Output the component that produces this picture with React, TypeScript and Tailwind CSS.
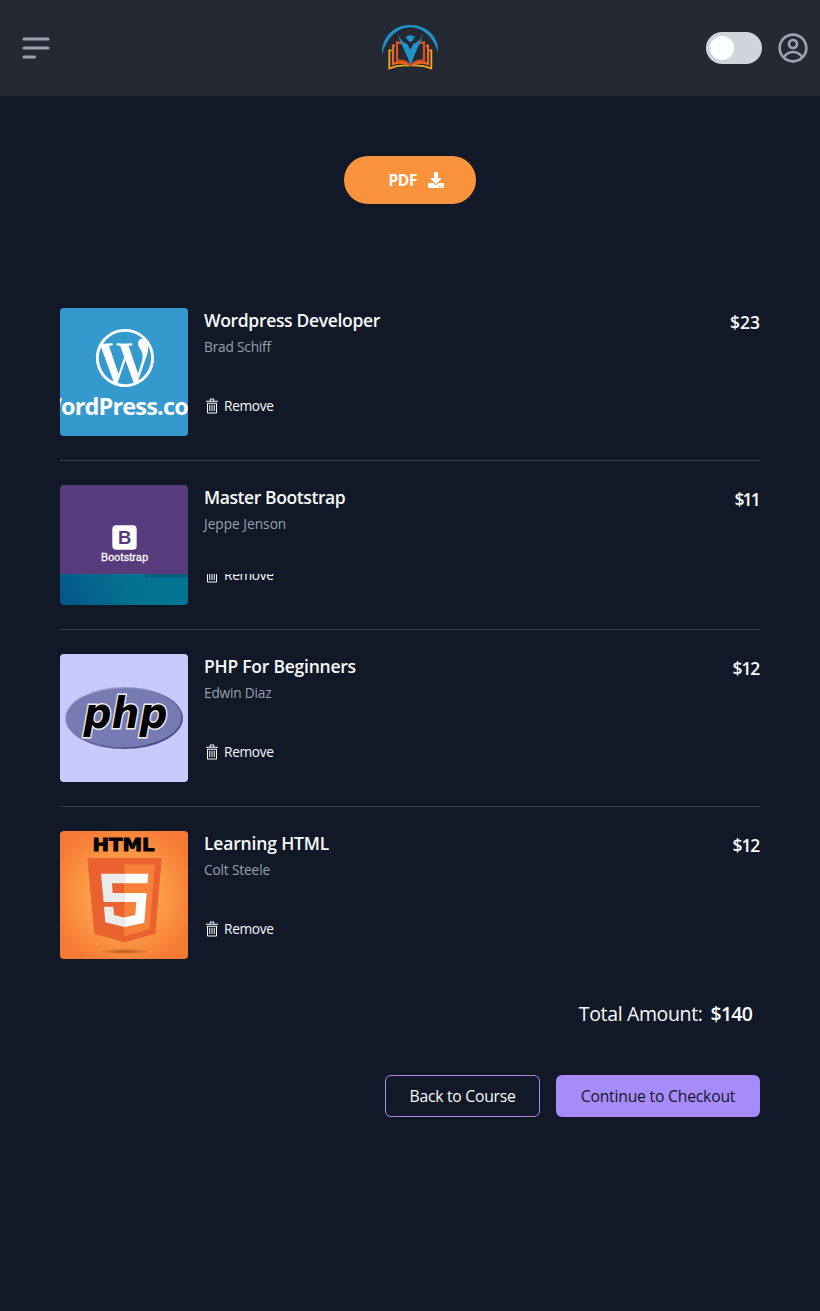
import type { ReactNode } from 'react';
import { CgProfile } from 'react-icons/cg';
import { FaDownload, FaWordpressSimple } from 'react-icons/fa';

function Logo() {
  return (
    <svg className="h-[75px] w-20" viewBox="0 0 240 225" fill="none">
      <path d="M37 132C31 82 70 42 121 42S209 80 204 126C194 84 162 49 121 49S46 86 37 132Z" fill="#2093c8" />
      <g strokeWidth="5.5">
        <g stroke="#f5a623">
          <path d="M65 118H58V172C78 164 100 162 119 164" />
          <path d="M178 118H184V172C164 164 142 162 124 164" />
        </g>
        <g stroke="#ea6a1f" strokeWidth="6.5">
          <path d="M75 104H69V159C86 152 102 154 118 162" />
          <path d="M168 104H174V159C156 152 140 154 125 162" />
        </g>
        <g stroke="#dd521c" strokeWidth="6.5">
          <path d="M99 99C94 95 88 94 81 94V149C97 148 109 152 118 161" />
          <path d="M144 99C149 95 154 94 162 94V149C146 148 134 152 125 161" />
        </g>
      </g>
      <path d="M82 67C90 86 100 95 112 99L121 116L130 99C142 95 152 86 160 67C151 98 134 126 122 165C110 126 91 98 82 67Z" fill="#2093c8" />
      <path d="M105 78L121 72L136 77L131 81C131 88 127 92 121 92S112 88 111 82Z" fill="#2093c8" />
    </svg>
  );
}

function TrashIcon() {
  return (
    <svg className="size-4 fill-current" viewBox="0 0 512 512">
      <path d="M96,472a23.82,23.82,0,0,0,23.579,24H392.421A23.82,23.82,0,0,0,416,472V152H96Zm32-288H384V464H128Z" />
      <rect width="32" height="200" x="168" y="216" />
      <rect width="32" height="200" x="240" y="216" />
      <rect width="32" height="200" x="312" y="216" />
      <path d="M328,88V40c0-13.458-9.488-24-21.6-24H205.6C193.488,16,184,26.542,184,40V88H64v32H448V88ZM216,48h80V88H216Z" />
    </svg>
  );
}

function WordpressArt() {
  return (
    <svg className="h-32 w-32 rounded" viewBox="0 0 128 128">
      <rect width="128" height="128" fill="#3499cd" />
      <FaWordpressSimple x="35" y="20" size={60} color="#fff" />
      <text x="65" y="107" textAnchor="middle" textLength="172" className="fill-white font-['Open_Sans',sans-serif] text-[23.5px] font-bold">
        WordPress.com
      </text>
    </svg>
  );
}

function BootstrapArt() {
  return (
    <svg className="h-[120px] w-32 rounded" viewBox="0 0 128 120">
      <defs>
        <linearGradient id="teal" gradientUnits="userSpaceOnUse" x1="-10" y1="120" x2="85" y2="70">
          <stop offset="0" stopColor="#05528a" />
          <stop offset="0.7" stopColor="#04708f" />
          <stop offset="1" stopColor="#047494" />
        </linearGradient>
      </defs>
      <rect width="128" height="89" fill="#573b7d" />
      <rect x="52.3" y="40.3" width="24.4" height="24.4" rx="4" fill="#fff" />
      <text x="64.8" y="59.2" textAnchor="middle" className="fill-[#573b7d] font-['Liberation_Sans',sans-serif] text-[18.5px] font-bold">B</text>
      <text x="64.5" y="76" textAnchor="middle" textLength="47" className="fill-white stroke-white stroke-[0.3px] font-['Liberation_Sans',sans-serif] text-[10.5px]">
        Bootstrap
      </text>
      <rect y="89" width="128" height="31" fill="url(#teal)" />
      <rect x="85" y="89" width="43" height="3.5" fill="#055f7c" />
    </svg>
  );
}

function PhpArt() {
  return (
    <svg className="h-32 w-32 rounded" viewBox="0 0 128 128">
      <defs>
        <linearGradient id="rim" x1="0" y1="0" x2="1" y2="1">
          <stop offset="0.1" stopColor="#b4b6e0" />
          <stop offset="0.5" stopColor="#6a6eab" />
          <stop offset="0.85" stopColor="#484b88" />
        </linearGradient>
      </defs>
      <rect width="128" height="128" fill="#c9c9fb" />
      <ellipse cx="64" cy="64" rx="59" ry="31" fill="url(#rim)" />
      <ellipse cx="63.7" cy="63.7" rx="57.5" ry="29.5" fill="#777bb3" />
      <text
        x="23.5"
        y="74"
        textLength="84"
        lengthAdjust="spacingAndGlyphs"
        paintOrder="stroke"
        className="fill-black stroke-[#eee] stroke-[3px] font-['DejaVu_Sans',sans-serif] text-[43px] font-bold italic"
      >
        php
      </text>
    </svg>
  );
}

function HtmlArt() {
  return (
    <svg className="h-32 w-32 rounded" viewBox="0 0 128 128">
      <defs>
        <radialGradient id="glow" cx="0.5" cy="0.5" r="0.58">
          <stop offset="0" stopColor="#fdb555" />
          <stop offset="0.5" stopColor="#fb9c47" />
          <stop offset="1" stopColor="#f77a34" />
        </radialGradient>
        <radialGradient id="shade">
          <stop offset="0" stopColor="#9a4a14" stopOpacity="0.7" />
          <stop offset="1" stopColor="#9a4a14" stopOpacity="0" />
        </radialGradient>
      </defs>
      <rect width="128" height="128" fill="url(#glow)" />
      <ellipse cx="65" cy="120.5" rx="26" ry="3" fill="url(#shade)" />
      <text
        x="32.5"
        y="20.3"
        textLength="62"
        lengthAdjust="spacingAndGlyphs"
        className="fill-black stroke-black stroke-[0.9px] font-['DejaVu_Sans',sans-serif] text-[18px] font-bold"
      >
        HTML
      </text>
      <path d="M27.3 27H101.7L95.3 102.7L64.3 111.3L34.3 102.7Z" fill="#e9622f" />
      <path d="M64.3 33.5H95L89.5 98.3L64.3 105.3Z" fill="#f7803a" />
      <path d="M41 42.7H64.3V52.3H52L52.7 62H64.3V71H43.7ZM44 75.7H53.3L54 84L64.3 86.5V96L45.3 91.3Z" fill="#ebebeb" />
      <path d="M64.3 42.7H88.3L87.5 52.3H64.3ZM64.3 62H86.7L84.3 91.7L64.3 96V86.5L75.3 84L76.3 71H64.3Z" fill="#fff" />
    </svg>
  );
}

type Course = {
  title: string;
  titleClass: string;
  author: string;
  authorClass: string;
  price: string;
  priceClass: string;
  art: ReactNode;
  cropped?: boolean;
};

const courses: Course[] = [
  { title: 'Wordpress Developer', titleClass: 'tracking-[-0.33px]', author: 'Brad Schiff', authorClass: 'tracking-[-0.2px]', price: '$23', priceClass: 'tracking-normal', art: <WordpressArt /> },
  { title: 'Master Bootstrap', titleClass: 'tracking-[-0.4px]', author: 'Jeppe Jenson', authorClass: 'tracking-normal', price: '$11', priceClass: 'tracking-[-1.8px] pr-px', art: <BootstrapArt />, cropped: true },
  { title: 'PHP For Beginners', titleClass: 'tracking-[-0.24px]', author: 'Edwin Diaz', authorClass: 'tracking-[-0.2px]', price: '$12', priceClass: 'tracking-[-1.2px] pr-px', art: <PhpArt /> },
  { title: 'Learning HTML', titleClass: 'tracking-[-0.17px]', author: 'Colt Steele', authorClass: 'tracking-[-0.15px]', price: '$12', priceClass: 'tracking-[-1.2px] pr-px', art: <HtmlArt /> },
];

function CourseRow({ course }: { course: Course }) {
  return (
    <li className="flex gap-4 py-6">
      <div className="shrink-0">{course.art}</div>
      <div className="flex flex-1 justify-between">
        <div>
          <h3 className={`text-[17.5px] leading-6 font-semibold text-gray-50 ${course.titleClass}`}>{course.title}</h3>
          <p className={`mt-[5px] text-[13.7px] leading-5 text-gray-400 ${course.authorClass}`}>{course.author}</p>
          <button
            className={
              course.cropped
                ? 'mt-[31px] flex h-5 items-center gap-1 [clip-path:inset(9px_0_0_0)]'
                : 'mt-[39px] flex h-5 items-center gap-1'
            }
          >
            <TrashIcon />
            <span className="text-[13.7px] leading-5 tracking-[-0.32px]">Remove</span>
          </button>
        </div>
        <p className={`text-[17.5px] leading-7 font-semibold ${course.priceClass}`}>{course.price}</p>
      </div>
    </li>
  );
}

export default function App() {
  return (
    <div className="min-h-[1311px] bg-[#111827] font-['Open_Sans','Noto_Sans',sans-serif] text-gray-50">
      <header className="grid h-24 grid-cols-3 items-center bg-[#242933] pr-[11px] pl-[18px]">
        <svg className="size-9 text-[#9ca3af]" viewBox="0 0 24 24" fill="none" stroke="currentColor" strokeWidth="2" strokeLinecap="round">
          <path d="M4 6h16M4 12h16M4 18h7" />
        </svg>
        <div className="-ml-[7px] flex justify-center">
          <Logo />
        </div>
        <div className="flex items-center justify-end gap-[15px]">
          <div className="flex h-8 w-14 items-center rounded-full bg-[#d1d5db] px-1">
            <span className="size-6 rounded-full bg-white" />
          </div>
          <CgProfile className="size-8 text-[#9ca3af]" />
        </div>
      </header>

      <main className="px-[60px] pt-[60px]">
        <div className="flex justify-center">
          <button className="flex h-12 w-[132px] items-center justify-end gap-[11px] rounded-full bg-[#fb923c] pr-8 text-[15.5px] font-bold tracking-[-0.4px] text-white">
            <span className="pt-0.5">PDF</span>
            <FaDownload className="size-4" />
          </button>
        </div>

        <ul className="mt-20 divide-y divide-[#374151]">
          {courses.map((course) => (
            <CourseRow key={course.title} course={course} />
          ))}
        </ul>

        <p className="mt-[17px] flex justify-end gap-2 pr-2 text-[19.5px] leading-7">
          <span className="tracking-[-0.35px]">Total Amount:</span>
          <span className="font-semibold tracking-[-0.8px]">$140</span>
        </p>

        <div className="mt-[47px] flex justify-end gap-4">
          <button className="h-[42px] w-[155px] rounded-md border border-[#a78bfa] pt-0.5 text-[15.7px] tracking-[-0.25px]">Back to Course</button>
          <button className="h-[42px] w-[204px] rounded-md bg-[#a78bfa] pt-0.5 text-[15.7px] tracking-[-0.2px] text-[#111827]">Continue to Checkout</button>
        </div>
      </main>
    </div>
  );
}
